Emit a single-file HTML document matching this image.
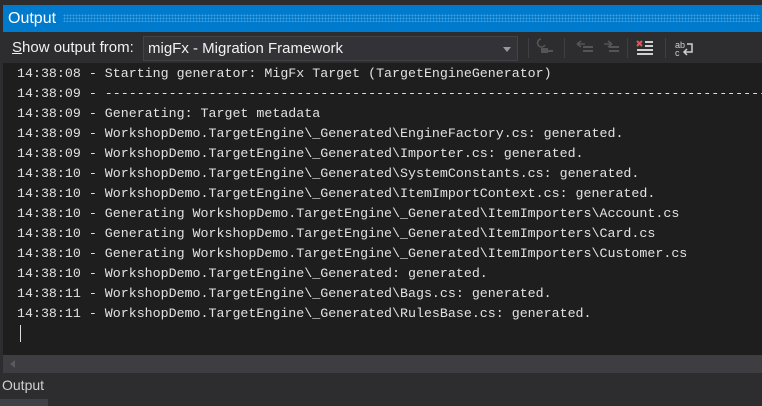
<!DOCTYPE html>
<html><head><style>
body{margin:0;width:762px;height:406px;background:#2d2d30;position:relative;overflow:hidden;font-family:"Liberation Sans",sans-serif}
.title{position:absolute;left:3px;top:5px;width:759px;height:27px;background:#007acc;color:#fff;font-size:16px;line-height:27px}
.title span{padding-left:5px}
.dots{position:absolute;left:63px;right:2px;top:14px;height:8px;background-image:radial-gradient(#46a0dc 0.8px,transparent 1px);background-size:3px 3px}
.lbl{position:absolute;left:12px;top:39px;color:#f1f1f1;font-size:15px}
.dd{position:absolute;left:143px;top:36px;background:#333337;border:1px solid #434346;color:#f1f1f1;font-size:15px;line-height:23px;padding-left:4px;box-sizing:border-box;width:375px;height:25px}
.arrow{position:absolute;right:6px;top:10px;border:4px solid transparent;border-top:5px solid #999}
.out{position:absolute;left:3px;top:63px;width:759px;height:292px;background:#1e1e1e;overflow:hidden}
pre{margin:0;position:absolute;left:14px;top:1px;font-family:"Liberation Mono",monospace;font-size:13.3px;line-height:20px;color:#e2e2e2}
.caret{position:absolute;left:17px;top:262px;width:1px;height:17px;background:#dcdcdc}
.sb{position:absolute;left:3px;top:355px;width:759px;height:18px;background:#3e3e42}
.sb i{position:absolute;left:7px;top:5px;border:4px solid transparent;border-right:5px solid #5a5a5e;border-left:0}
.bot{position:absolute;left:2px;top:377px;color:#d0d0d0;font-size:14px}
.tab{position:absolute;left:0;top:399px;width:48px;height:7px;background:#3f3f46}
.sep{position:absolute;top:38px;width:1px;height:20px;background:#3f3f46}
</style></head><body>
<div class="title"><span>Output</span></div>
<div class="dots"></div>
<div class="lbl"><u>S</u>how output from:</div>
<div class="dd">migFx - Migration Framework<div class="arrow"></div></div>
<div class="sep" style="left:528px"></div>
<div class="sep" style="left:564px"></div>
<div class="sep" style="left:627px"></div>
<div class="sep" style="left:665px"></div>
<svg style="position:absolute;left:535px;top:36px" width="230" height="24">
<g fill="#555" stroke="#555">
<path d="M6 3 a4 4 0 1 0 4 6" fill="none" stroke-width="1.5"/>
<rect x="6" y="12" width="7" height="5" stroke="none"/><rect x="10" y="14" width="8" height="2" stroke="none"/>
<rect x="48" y="10" width="10" height="2" stroke="none"/><rect x="48" y="14" width="10" height="2" stroke="none"/><path d="M42 8 l4-3 M42 8 l4 3 M42 8 h8" fill="none" stroke-width="1.5"/>
<rect x="74" y="10" width="10" height="2" stroke="none"/><rect x="74" y="14" width="10" height="2" stroke="none"/><path d="M77 8 l-4-3 M77 8 l-4 3 M77 8 h-8" fill="none" stroke-width="1.5"/>
</g>
<path d="M102 5 l5 5 M107 5 l-5 5" stroke="#e0584c" stroke-width="2"/>
<g fill="#d0d0d0"><rect x="110" y="5" width="8" height="2"/><rect x="110" y="9" width="8" height="2"/><rect x="102" y="13" width="16" height="2"/><rect x="102" y="17" width="16" height="2"/></g>
<text x="140" y="12" fill="#d0d0d0" font-size="9" font-family="Liberation Sans">ab</text><text x="140" y="20" fill="#d0d0d0" font-size="9" font-family="Liberation Sans">c</text>
<path d="M152 8 h5 v8 h-8 M152 13 l-3 3 3 3" fill="none" stroke="#d0d0d0" stroke-width="1.5"/>
</svg>
<div class="out"><pre>14:38:08 - Starting generator: MigFx Target (TargetEngineGenerator)
14:38:09 - ------------------------------------------------------------------------------------
14:38:09 - Generating: Target metadata
14:38:09 - WorkshopDemo.TargetEngine\_Generated\EngineFactory.cs: generated.
14:38:09 - WorkshopDemo.TargetEngine\_Generated\Importer.cs: generated.
14:38:10 - WorkshopDemo.TargetEngine\_Generated\SystemConstants.cs: generated.
14:38:10 - WorkshopDemo.TargetEngine\_Generated\ItemImportContext.cs: generated.
14:38:10 - Generating WorkshopDemo.TargetEngine\_Generated\ItemImporters\Account.cs
14:38:10 - Generating WorkshopDemo.TargetEngine\_Generated\ItemImporters\Card.cs
14:38:10 - Generating WorkshopDemo.TargetEngine\_Generated\ItemImporters\Customer.cs
14:38:10 - WorkshopDemo.TargetEngine\_Generated: generated.
14:38:11 - WorkshopDemo.TargetEngine\_Generated\Bags.cs: generated.
14:38:11 - WorkshopDemo.TargetEngine\_Generated\RulesBase.cs: generated.</pre><div class="caret"></div></div>
<div class="sb"><i></i></div>
<div class="bot">Output</div>
<div class="tab"></div>
</body></html>
